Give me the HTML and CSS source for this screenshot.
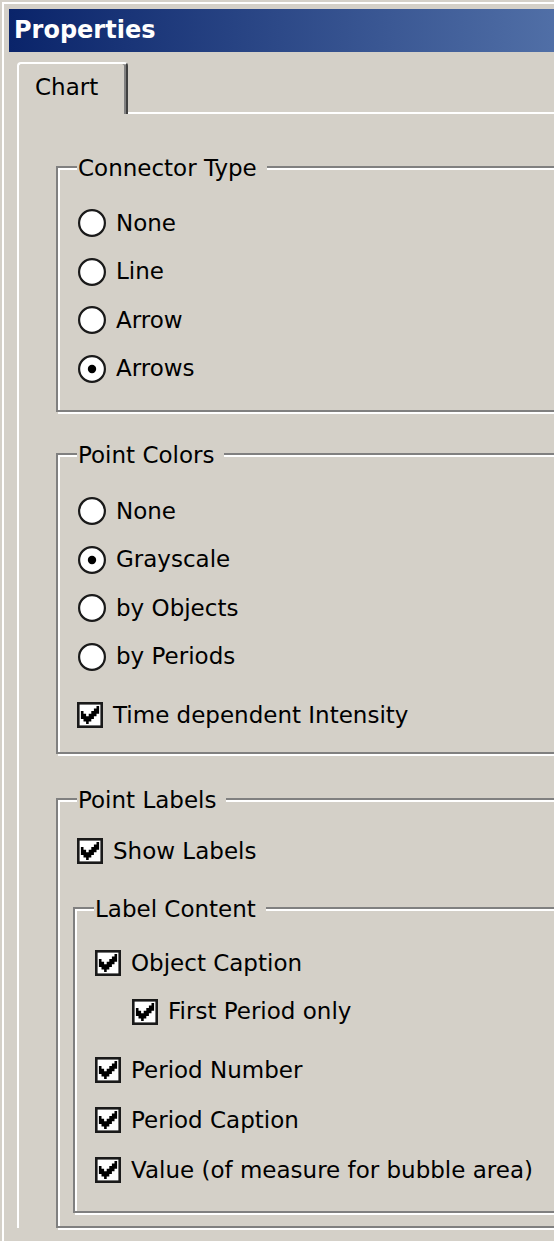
FILE: index.html
```html
<!DOCTYPE html>
<html>
<head>
<meta charset="utf-8">
<title>Properties</title>
<link rel="stylesheet" href="styles.css">
</head>
<body>
<div class="window">
  <div class="frame">
    <div class="titlebar">Properties</div>
    <div class="tabs">
      <div class="tab">Chart</div>
      <div class="tab-fill"></div>
    </div>
    <div class="panel">
      <div class="group g1">
        <span class="legend">Connector Type</span>
        <div class="opt"><svg class="radio" width="28" height="28" viewBox="0 0 28 28"><circle cx="14" cy="14" r="12.9" fill="#fff" stroke="#1a1a1a" stroke-width="2.2"/></svg><span>None</span></div>
        <div class="opt"><svg class="radio" width="28" height="28" viewBox="0 0 28 28"><circle cx="14" cy="14" r="12.9" fill="#fff" stroke="#1a1a1a" stroke-width="2.2"/></svg><span>Line</span></div>
        <div class="opt"><svg class="radio" width="28" height="28" viewBox="0 0 28 28"><circle cx="14" cy="14" r="12.9" fill="#fff" stroke="#1a1a1a" stroke-width="2.2"/></svg><span>Arrow</span></div>
        <div class="opt"><svg class="radio" width="28" height="28" viewBox="0 0 28 28"><circle cx="14" cy="14" r="12.9" fill="#fff" stroke="#1a1a1a" stroke-width="2.2"/><circle cx="14" cy="14" r="4.2" fill="#000"/></svg><span>Arrows</span></div>
      </div>

      <div class="group g2">
        <span class="legend">Point Colors</span>
        <div class="opt"><svg class="radio" width="28" height="28" viewBox="0 0 28 28"><circle cx="14" cy="14" r="12.9" fill="#fff" stroke="#1a1a1a" stroke-width="2.2"/></svg><span>None</span></div>
        <div class="opt"><svg class="radio" width="28" height="28" viewBox="0 0 28 28"><circle cx="14" cy="14" r="12.9" fill="#fff" stroke="#1a1a1a" stroke-width="2.2"/><circle cx="14" cy="14" r="4.2" fill="#000"/></svg><span>Grayscale</span></div>
        <div class="opt"><svg class="radio" width="28" height="28" viewBox="0 0 28 28"><circle cx="14" cy="14" r="12.9" fill="#fff" stroke="#1a1a1a" stroke-width="2.2"/></svg><span>by Objects</span></div>
        <div class="opt"><svg class="radio" width="28" height="28" viewBox="0 0 28 28"><circle cx="14" cy="14" r="12.9" fill="#fff" stroke="#1a1a1a" stroke-width="2.2"/></svg><span>by Periods</span></div>
        <div class="opt gap10"><svg class="check" width="26" height="26" viewBox="0 0 13 13"><rect x="0" y="0" width="13" height="13" fill="#1a1a1a"/><rect x="1.3" y="1.3" width="10.4" height="10.4" fill="#fff"/><path transform="translate(6.5 6.5) scale(1.3) translate(-6.5 -6.5)" d="M9 3H10V6H9V7H8V8H7V9H6V10H5V9H4V8H3V5H4V6H5V7H6V6H7V5H8V4H9Z" fill="#000"/></svg><span>Time dependent Intensity</span></div>
      </div>

      <div class="group g3">
        <span class="legend">Point Labels</span>
        <div class="opt"><svg class="check" width="26" height="26" viewBox="0 0 13 13"><rect x="0" y="0" width="13" height="13" fill="#1a1a1a"/><rect x="1.3" y="1.3" width="10.4" height="10.4" fill="#fff"/><path transform="translate(6.5 6.5) scale(1.3) translate(-6.5 -6.5)" d="M9 3H10V6H9V7H8V8H7V9H6V10H5V9H4V8H3V5H4V6H5V7H6V6H7V5H8V4H9Z" fill="#000"/></svg><span>Show Labels</span></div>
        <div class="group inner">
          <span class="legend">Label Content</span>
          <div class="opt"><svg class="check" width="26" height="26" viewBox="0 0 13 13"><rect x="0" y="0" width="13" height="13" fill="#1a1a1a"/><rect x="1.3" y="1.3" width="10.4" height="10.4" fill="#fff"/><path transform="translate(6.5 6.5) scale(1.3) translate(-6.5 -6.5)" d="M9 3H10V6H9V7H8V8H7V9H6V10H5V9H4V8H3V5H4V6H5V7H6V6H7V5H8V4H9Z" fill="#000"/></svg><span>Object Caption</span></div>
          <div class="opt sub"><svg class="check" width="26" height="26" viewBox="0 0 13 13"><rect x="0" y="0" width="13" height="13" fill="#1a1a1a"/><rect x="1.3" y="1.3" width="10.4" height="10.4" fill="#fff"/><path transform="translate(6.5 6.5) scale(1.3) translate(-6.5 -6.5)" d="M9 3H10V6H9V7H8V8H7V9H6V10H5V9H4V8H3V5H4V6H5V7H6V6H7V5H8V4H9Z" fill="#000"/></svg><span>First Period only</span></div>
          <div class="opt gap10"><svg class="check" width="26" height="26" viewBox="0 0 13 13"><rect x="0" y="0" width="13" height="13" fill="#1a1a1a"/><rect x="1.3" y="1.3" width="10.4" height="10.4" fill="#fff"/><path transform="translate(6.5 6.5) scale(1.3) translate(-6.5 -6.5)" d="M9 3H10V6H9V7H8V8H7V9H6V10H5V9H4V8H3V5H4V6H5V7H6V6H7V5H8V4H9Z" fill="#000"/></svg><span>Period Number</span></div>
          <div class="opt gap2"><svg class="check" width="26" height="26" viewBox="0 0 13 13"><rect x="0" y="0" width="13" height="13" fill="#1a1a1a"/><rect x="1.3" y="1.3" width="10.4" height="10.4" fill="#fff"/><path transform="translate(6.5 6.5) scale(1.3) translate(-6.5 -6.5)" d="M9 3H10V6H9V7H8V8H7V9H6V10H5V9H4V8H3V5H4V6H5V7H6V6H7V5H8V4H9Z" fill="#000"/></svg><span>Period Caption</span></div>
          <div class="opt gap2"><svg class="check" width="26" height="26" viewBox="0 0 13 13"><rect x="0" y="0" width="13" height="13" fill="#1a1a1a"/><rect x="1.3" y="1.3" width="10.4" height="10.4" fill="#fff"/><path transform="translate(6.5 6.5) scale(1.3) translate(-6.5 -6.5)" d="M9 3H10V6H9V7H8V8H7V9H6V10H5V9H4V8H3V5H4V6H5V7H6V6H7V5H8V4H9Z" fill="#000"/></svg><span>Value (of measure for bubble area)</span></div>
        </div>
      </div>
    </div>
  </div>
</div>
</body>
</html>
```
FILE: styles.css
```css
html, body {
  margin: 0;
  padding: 0;
  background: #d4d0c8;
  overflow: hidden;
}
body {
  font-family: "DejaVu Sans", Verdana, sans-serif;
  font-size: 23px;
  color: #000;
}
.window {
  width: 554px;
  height: 1241px;
  overflow: hidden;
  padding: 2px 0 0 2px;
  box-sizing: border-box;
  background: #d4d0c8;
}
.frame {
  width: 1400px;
  height: 1300px;
  border-top: 2px solid #fff;
  border-left: 2px solid #fff;
  padding: 5px 0 0 5px;
  box-sizing: border-box;
}
.titlebar {
  width: 1211px;
  height: 43px;
  line-height: 43px;
  padding-left: 5px;
  box-sizing: border-box;
  background: linear-gradient(to right, #0a246a, #a6caf0);
  color: #fff;
  font-weight: bold;
  font-size: 24px;
}
.tabs {
  display: flex;
  margin: 10px 0 0 8px;
  width: 900px;
}
.tab {
  width: 111px;
  height: 52px;
  box-sizing: border-box;
  border-top: 2px solid #fff;
  border-left: 2px solid #fff;
  border-right: 2px solid #404040;
  border-radius: 4px 4px 0 0;
  box-shadow: inset -2px 0 0 #808080;
  padding: 0 0 4px 16px;
  display: flex;
  align-items: center;
}
.tab-fill {
  flex: 1;
  height: 52px;
  box-sizing: border-box;
  border-bottom: 2px solid #fff;
}
.panel {
  margin-left: 8px;
  width: 900px;
  border-left: 2px solid #fff;
  padding: 52px 0 0 37px;
}
.group {
  position: relative;
  width: 700px;
  border: 2px solid #808080;
  box-shadow: inset 2px 2px 0 #fff, 2px 2px 0 #fff;
}
.legend {
  position: absolute;
  left: 19px;
  top: -13.5px;
  line-height: 27px;
  padding: 0 10px 0 1px;
  background: #d4d0c8;
  white-space: nowrap;
}
.opt {
  display: flex;
  align-items: center;
  height: 48.5px;
  padding-left: 19px;
  white-space: nowrap;
}
.opt span {
  line-height: 27px;
}
.radio {
  margin-left: 1px;
  margin-right: 10px;
  flex: none;
}
.check {
  margin-right: 10px;
  flex: none;
}
.gap10 { margin-top: 10px; }
.gap2 { margin-top: 1.5px; }
.g1 {
  padding: 30.75px 0 17.25px 0;
}
.g2 {
  margin-top: 41px;
  padding: 31.75px 0 12.75px 0;
}
.g3 {
  margin-top: 44px;
  padding: 26.75px 0 13px 0;
}
.inner {
  width: 680px;
  margin: 31.75px 0 0 15px;
  padding: 29.75px 0 16.75px 0;
}
.inner .opt { padding-left: 20px; }
.inner .opt.sub { padding-left: 57px; }
```
